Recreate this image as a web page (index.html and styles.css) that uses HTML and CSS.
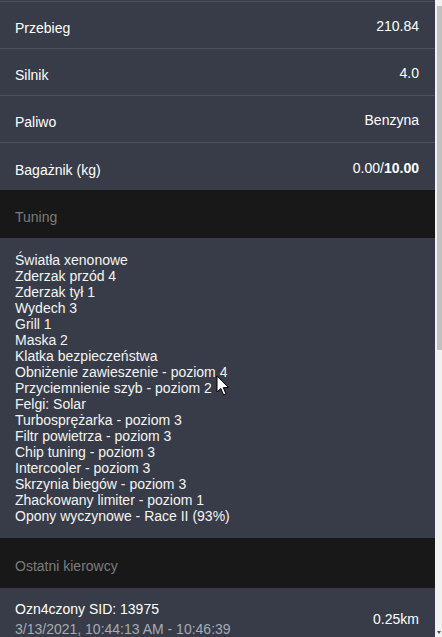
FILE: index.html
```html
<!DOCTYPE html>
<html lang="pl">
<head>
<meta charset="utf-8">
<title>Pojazd</title>
<link rel="stylesheet" href="styles.css">
</head>
<body>
<div class="frame">
  <main class="panel">
    <div class="props">
      <div class="row"><span class="label">Przebieg</span><span class="value">210.84</span></div>
      <div class="row"><span class="label">Silnik</span><span class="value">4.0</span></div>
      <div class="row"><span class="label">Paliwo</span><span class="value">Benzyna</span></div>
      <div class="row"><span class="label">Bagażnik (kg)</span><span class="value">0.00/<b>10.00</b></span></div>
    </div>
    <div class="section-head">Tuning</div>
    <ul class="tuning">
      <li>Światła xenonowe</li>
      <li>Zderzak przód 4</li>
      <li>Zderzak tył 1</li>
      <li>Wydech 3</li>
      <li>Grill 1</li>
      <li>Maska 2</li>
      <li>Klatka bezpieczeństwa</li>
      <li>Obniżenie zawieszenie - poziom 4</li>
      <li>Przyciemnienie szyb - poziom 2</li>
      <li>Felgi: Solar</li>
      <li>Turbosprężarka - poziom 3</li>
      <li>Filtr powietrza - poziom 3</li>
      <li>Chip tuning - poziom 3</li>
      <li>Intercooler - poziom 3</li>
      <li>Skrzynia biegów - poziom 3</li>
      <li>Zhackowany limiter - poziom 1</li>
      <li>Opony wyczynowe - Race II (93%)</li>
    </ul>
    <div class="section-head section-head-tall">Ostatni kierowcy</div>
    <div class="driver">
      <div class="driver-info">
        <div class="driver-name">Ozn4czony SID: 13975</div>
        <div class="driver-time">3/13/2021, 10:44:13 AM - 10:46:39</div>
      </div>
      <div class="driver-dist">0.25km</div>
    </div>
  </main>
  <div class="scrollbar"><div class="thumb"></div><div class="arrow"></div></div>
</div>
<svg class="cursor" width="14" height="22" viewBox="0 0 14 22" aria-hidden="true">
  <path d="M1 1 L1 17 L4.8 13.4 L7.6 20 L10 19 L7.3 12.6 L12.5 12.6 Z" fill="#fff" stroke="#000" stroke-width="1" stroke-linejoin="round"/>
</svg>
</body>
</html>
```
FILE: styles.css
```css
html, body {
  margin: 0;
  padding: 0;
  background: #f1f1f1;
  overflow: hidden;
}
body {
  font-family: "Liberation Sans", Arial, sans-serif;
  font-size: 14px;
  color: #ffffff;
  width: 442px;
  height: 637px;
  position: relative;
}
.frame {
  display: flex;
  width: 442px;
  height: 637px;
  overflow: hidden;
}
.panel {
  width: 435px;
  flex: none;
  background: #373c48;
  padding-top: 1px;
}
.props {
  display: flex;
  flex-direction: column;
}
.row {
  display: flex;
  justify-content: space-between;
  align-items: center;
  height: 46px;
  border-top: 1px solid #4c5260;
  padding: 0 16px 0 15px;
  line-height: 16px;
}
.row:last-child {
  height: 47px;
}
.label {
  padding-top: 6px;
}
.value {
  padding-top: 2px;
}
.value b {
  font-weight: bold;
}
.section-head {
  background: #181818;
  color: #7c7c7c;
  line-height: 16px;
  padding: 19px 15px 13px;
}
.section-head-tall {
  padding-top: 20px;
  padding-bottom: 14px;
}
.tuning {
  list-style: none;
  margin: 0;
  padding: 14px 15px 14px;
  line-height: 16px;
  color: #f4f4f4;
}
.driver {
  display: flex;
  justify-content: space-between;
  align-items: center;
  padding: 11px 16px 12px 15px;
}
.driver-info {
  line-height: 20px;
}
.driver-name {
  color: #ffffff;
}
.driver-time {
  color: #a7abb3;
}
.driver-dist {
  color: #ffffff;
}
.scrollbar {
  width: 7px;
  flex: none;
  background: #f1f1f1;
  position: relative;
}
.thumb {
  margin: 6px 0 0 2px;
  width: 5px;
  height: 344px;
  background: #c1c1c1;
}
.arrow {
  position: absolute;
  right: 1px;
  bottom: 3px;
  width: 0;
  height: 0;
  border-left: 2px solid transparent;
  border-right: 2px solid transparent;
  border-top: 3px solid #505050;
}
.cursor {
  position: absolute;
  left: 216px;
  top: 375px;
}
```
